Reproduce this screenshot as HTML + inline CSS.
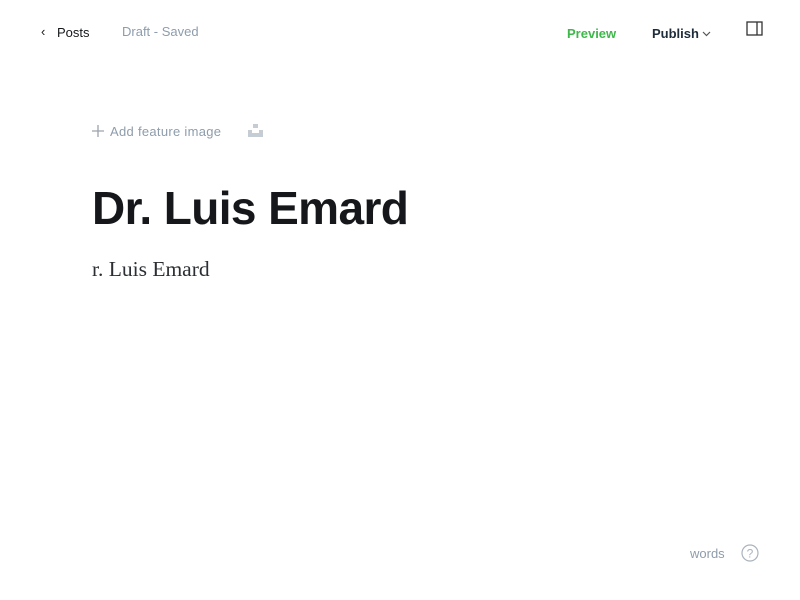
<!DOCTYPE html>
<html><head><style>
body{margin:0;width:800px;height:600px;background:#fff;font-family:"Liberation Sans",sans-serif;position:relative;overflow:hidden}
.a{position:absolute;white-space:nowrap}
</style></head><body>
<div class="a" style="left:41px;top:24px;font-size:13px;color:#15171a">&#8249;</div>
<div class="a" style="left:57px;top:25px;font-size:13px;color:#15171a">Posts</div>
<div class="a" style="left:122px;top:24px;font-size:13px;color:#8e9cac">Draft - Saved</div>
<div class="a" style="left:567px;top:26px;font-size:13px;color:#3eb84a;font-weight:bold">Preview</div>
<div class="a" style="left:652px;top:26px;font-size:13px;color:#1d2b3a;font-weight:bold">Publish</div>
<svg class="a" style="left:702px;top:31px" width="9" height="6"><path d="M1 1L4.5 4.5L8 1" fill="none" stroke="#555" stroke-width="1.2"/></svg>
<svg class="a" style="left:746px;top:21px" width="17" height="15"><rect x="1" y="1" width="15" height="13" fill="none" stroke="#333" stroke-width="1.3"/><line x1="11" y1="1" x2="11" y2="14" stroke="#333" stroke-width="1.3"/></svg>
<svg class="a" style="left:92px;top:125px" width="12" height="12"><path d="M6 0V12M0 6H12" stroke="#9aa3ad" stroke-width="1.3"/></svg>
<div class="a" style="left:110px;top:124px;font-size:13px;color:#8e9cac;letter-spacing:0.3px">Add feature image</div>
<svg class="a" style="left:248px;top:124px" width="15" height="14"><rect x="5" y="0" width="5" height="4" fill="#c5ccd3"/><rect x="0" y="6" width="15" height="7" fill="#c5ccd3"/><rect x="4" y="6" width="7" height="3" fill="#fff"/></svg>
<div class="a" style="left:92px;top:181px;font-size:46px;font-weight:bold;color:#15171a;letter-spacing:-0.6px">Dr. Luis Emard</div>
<div class="a" style="left:92px;top:257px;font-size:21.5px;color:#2b2f33;font-family:'Liberation Serif',serif">r. Luis Emard</div>
<div class="a" style="left:690px;top:546px;font-size:13px;color:#8e9cac">words</div>
<svg class="a" style="left:741px;top:544px" width="18" height="18"><circle cx="9" cy="9" r="8" fill="none" stroke="#aab3bc" stroke-width="1.2"/><text x="9" y="13.5" font-size="12" text-anchor="middle" fill="#aab3bc" font-family="Liberation Sans">?</text></svg>
</body></html>
